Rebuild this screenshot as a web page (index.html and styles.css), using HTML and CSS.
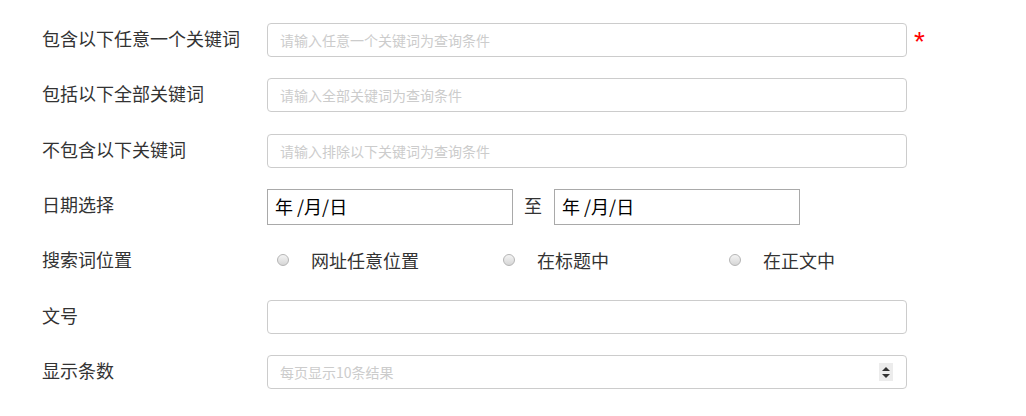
FILE: index.html
```html
<!DOCTYPE html>
<html lang="zh-CN">
<head>
<meta charset="utf-8">
<link rel="stylesheet" href="styles.css">
</head>
<body>
<form class="search-form">
  <div class="row">
    <label class="label">包含以下任意一个关键词</label>
    <input class="text-input" type="text" placeholder="请输入任意一个关键词为查询条件">
    <span class="required">*</span>
  </div>
  <div class="row">
    <label class="label">包括以下全部关键词</label>
    <input class="text-input" type="text" placeholder="请输入全部关键词为查询条件">
  </div>
  <div class="row">
    <label class="label">不包含以下关键词</label>
    <input class="text-input" type="text" placeholder="请输入排除以下关键词为查询条件">
  </div>
  <div class="row">
    <label class="label">日期选择</label>
    <div class="date-box">年 /月/日</div>
    <span class="to">至</span>
    <div class="date-box">年 /月/日</div>
  </div>
  <div class="row">
    <label class="label">搜索词位置</label>
    <div class="radios">
      <span class="radio-item"><span class="radio"></span>网址任意位置</span>
      <span class="radio-item"><span class="radio"></span>在标题中</span>
      <span class="radio-item"><span class="radio"></span>在正文中</span>
    </div>
  </div>
  <div class="row">
    <label class="label">文号</label>
    <input class="text-input" type="text">
  </div>
  <div class="row">
    <label class="label">显示条数</label>
    <div class="number-box">
      <input class="number-input" type="text" placeholder="每页显示10条结果">
      <span class="spin">
        <svg width="14" height="16" viewBox="0 0 14 16"><path d="M3 7 L7 3 L11 7 Z" fill="#333"/><path d="M3 10 L7 14 L11 10 Z" fill="#333"/></svg>
      </span>
    </div>
  </div>
</form>
</body>
</html>
```
FILE: styles.css
```css
html, body {
  margin: 0;
  padding: 0;
  background: #fff;
}
body {
  font-family: "Microsoft YaHei", "Noto Sans CJK SC", "Noto Sans", sans-serif;
  color: #333;
}
.search-form {
  padding: 23px 0 0 42px;
  display: grid;
  grid-auto-rows: 55.33px;
}
.row {
  display: flex;
  align-items: flex-start;
}
.label {
  width: 225px;
  height: 34px;
  line-height: 30px;
  font-size: 18px;
  color: #333;
  flex: none;
}
.text-input {
  box-sizing: border-box;
  width: 640px;
  height: 34px;
  border: 1px solid #ccc;
  border-radius: 4px;
  padding: 0 12px;
  font-family: inherit;
  font-size: 14px;
  color: #555;
  outline: none;
}
.text-input::placeholder,
.number-input::placeholder {
  color: #ccc;
}
.required {
  color: #f00;
  font-size: 28px;
  line-height: 34px;
  margin-left: 7px;
  font-family: "Liberation Sans", sans-serif;
  position: relative;
  top: 2px;
}
.date-box {
  box-sizing: border-box;
  width: 246px;
  height: 36px;
  border: 1px solid #a9a9a9;
  padding: 0 7px;
  font-size: 18px;
  line-height: 33px;
  color: #000;
}
.to {
  font-size: 18px;
  line-height: 32px;
  color: #333;
  margin: 0 12px 0 11px;
}
.radios {
  display: flex;
  box-sizing: border-box;
  height: 34px;
  align-items: center;
  padding: 0 0 3px 10px;
}
.radio-item {
  display: flex;
  align-items: center;
  width: 226px;
  font-size: 18px;
  color: #333;
}
.radio {
  box-sizing: border-box;
  width: 12px;
  height: 12px;
  border-radius: 50%;
  border: 1px solid #b5b5b5;
  background: linear-gradient(#f4f4f4, #d6d6d6);
  margin-right: 22px;
  flex: none;
}
.number-box {
  box-sizing: border-box;
  width: 640px;
  height: 34px;
  border: 1px solid #ccc;
  border-radius: 4px;
  display: flex;
  align-items: center;
  padding: 0 13px 0 12px;
}
.number-input {
  flex: 1;
  border: none;
  outline: none;
  font-family: inherit;
  font-size: 14px;
  color: #555;
  padding: 0;
  height: 30px;
}
.spin {
  width: 14px;
  height: 18px;
  background: #ececec;
  display: flex;
  align-items: center;
  justify-content: center;
}
```
